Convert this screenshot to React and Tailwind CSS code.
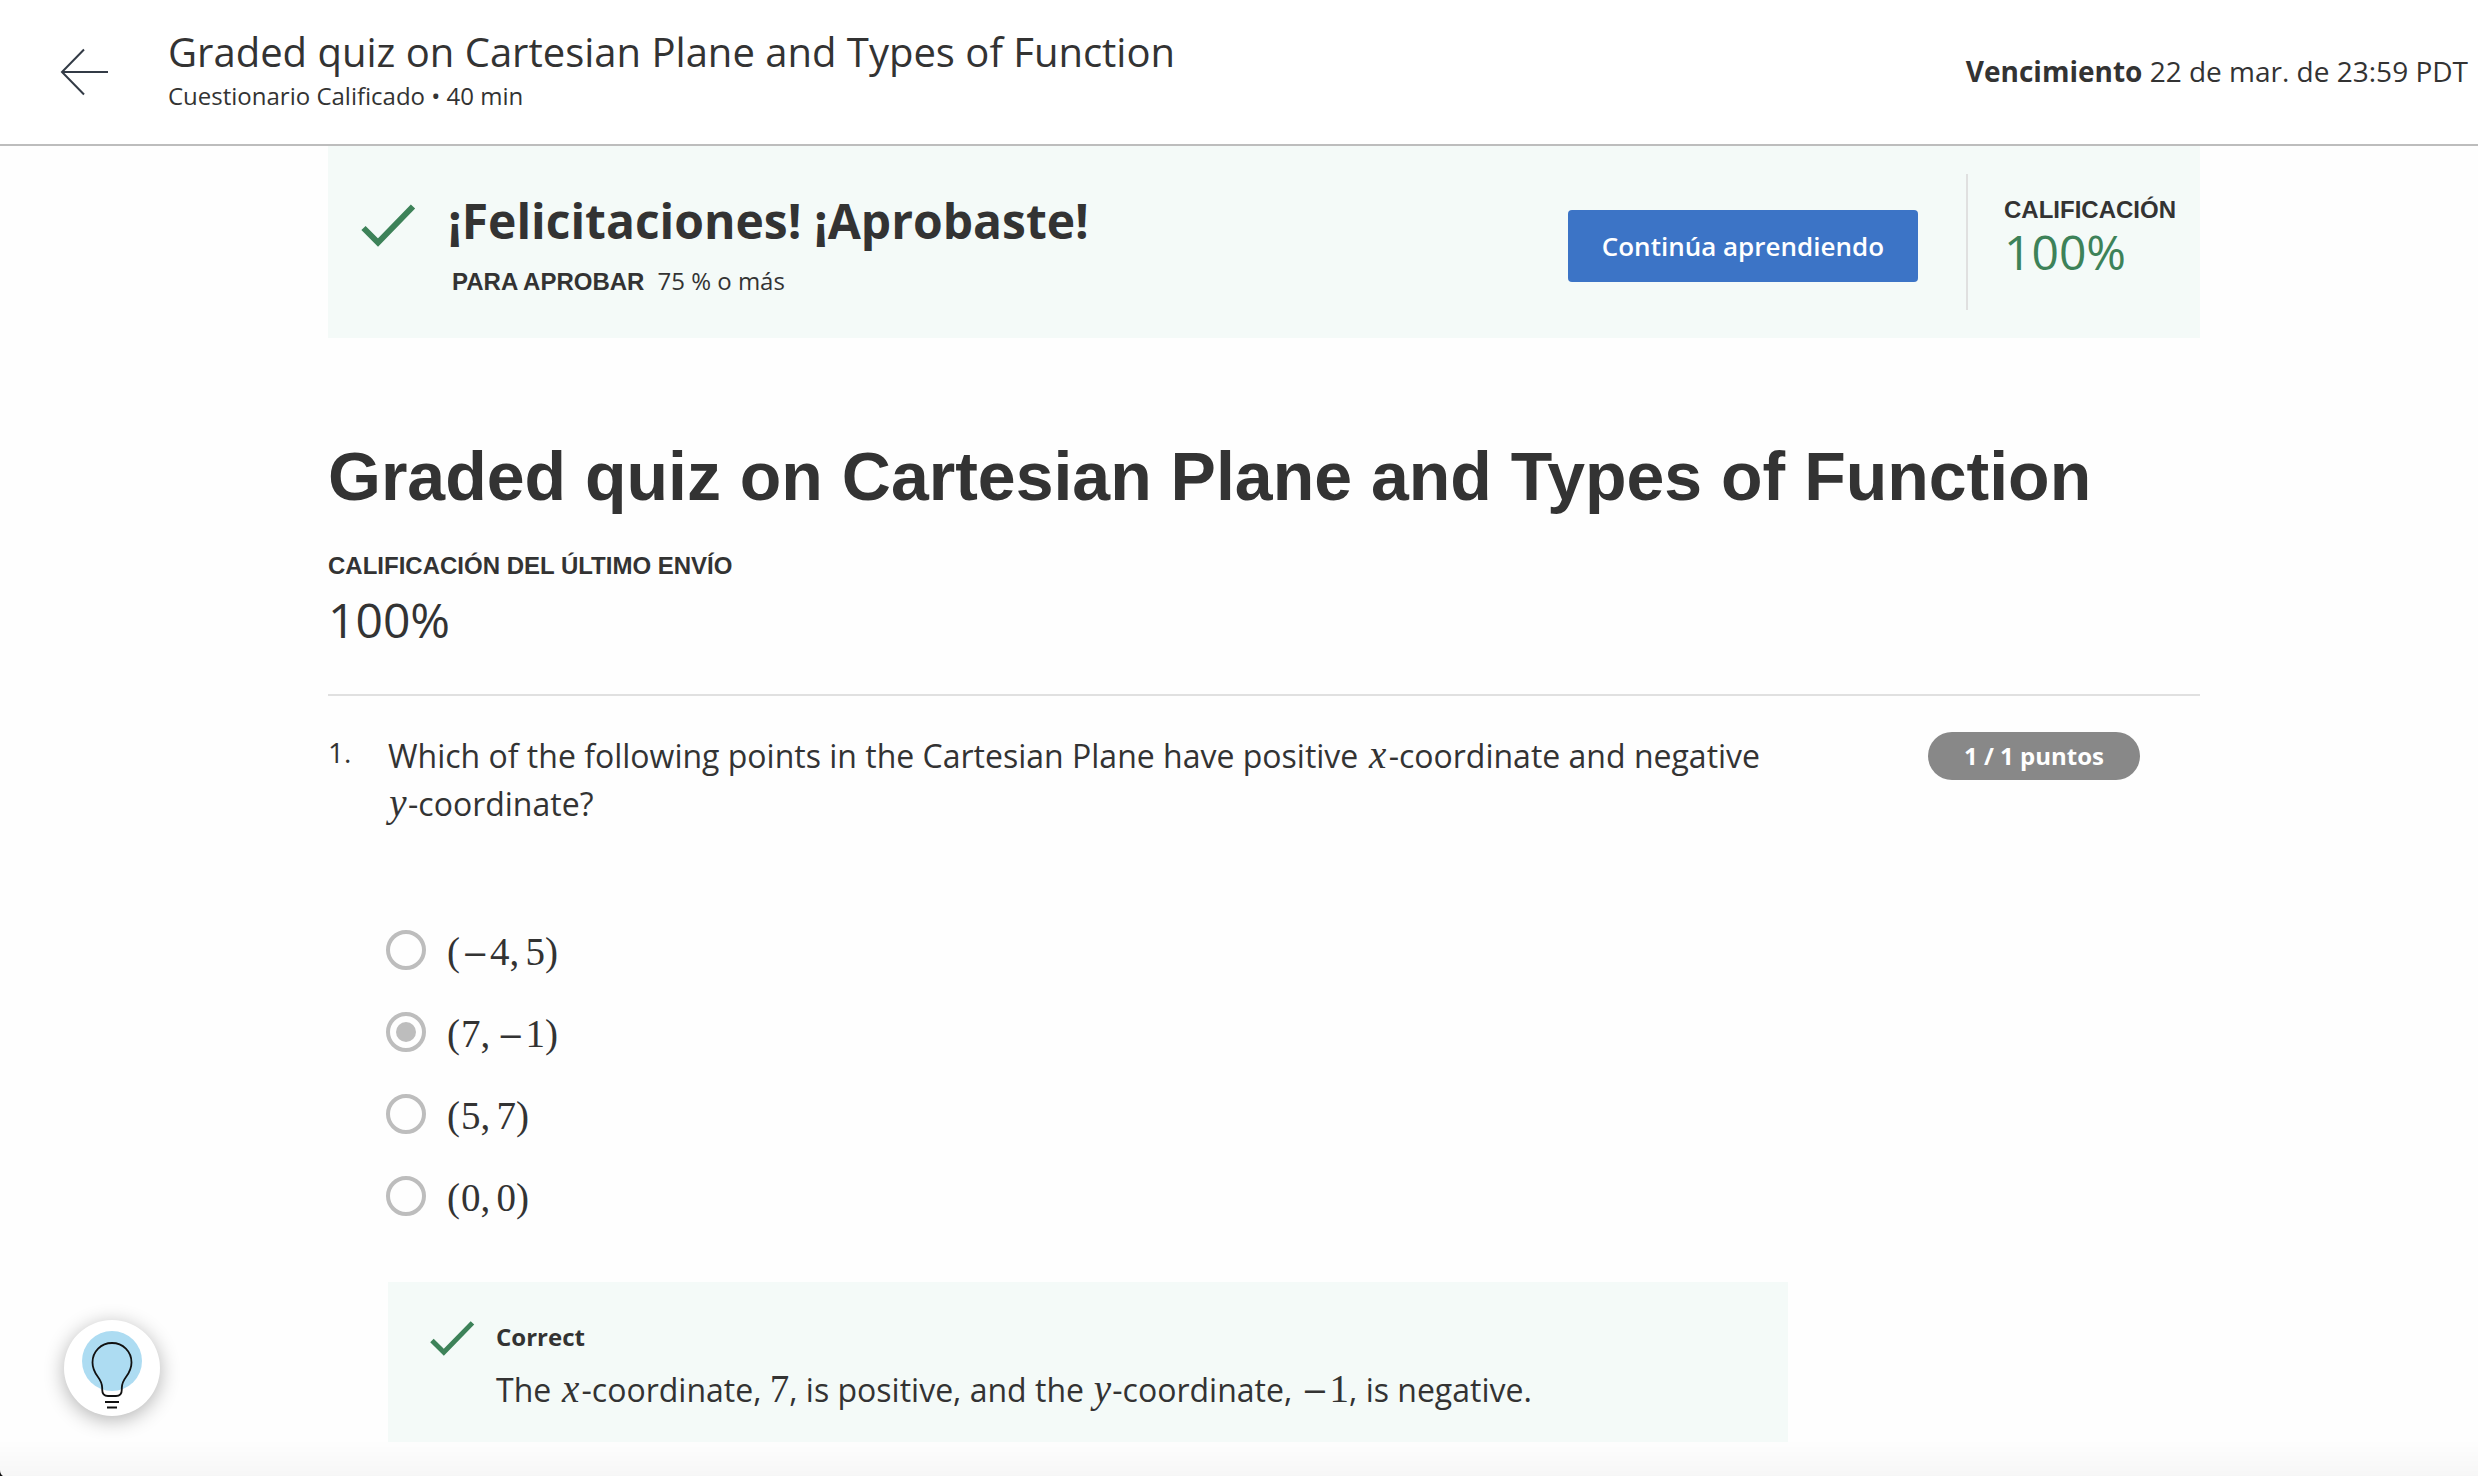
const OPTIONS = [
  { id: "a", first: "−4", second: "5", checked: false },
  { id: "b", first: "7", second: "−1", checked: true },
  { id: "c", first: "5", second: "7", checked: false },
  { id: "d", first: "0", second: "0", checked: false },
];

function BackArrow() {
  return (
    <svg width="48" height="48" viewBox="0 0 48 48" fill="none" stroke="#333b46" strokeWidth="2" aria-hidden="true">
      <path d="M24 1.5 2 24l22 22.5M2 24h46" />
    </svg>
  );
}

function Check({ className }) {
  return (
    <svg viewBox="0 0 56 44" fill="none" stroke="#3d8259" strokeWidth="6" className={className} aria-hidden="true">
      <path d="M3.500 25 18 39.500 53 3.500" />
    </svg>
  );
}

function Bulb() {
  return (
    <svg width="96" height="96" viewBox="0 0 96 96" fill="none" aria-hidden="true">
      <circle cx="48" cy="41" r="30" fill="#addcf2" />
      <path
        d="M48 23c-11 0-19.500 8.700-19.500 19.500 0 6 2.500 10.500 5.500 14.500 3 4 4.200 7 4.200 11v1.500c0 4 2 6.500 5.800 6.500h8c3.800 0 5.800-2.500 5.800-6.500V68c0-4 1.200-7 4.200-11 3-4 5.500-8.500 5.500-14.500C67.500 31.700 59 23 48 23Z"
        stroke="#111"
        strokeWidth="1.800"
      />
      <path d="M41 82h14M43 87.500h10" stroke="#111" strokeWidth="1.800" />
    </svg>
  );
}

function Variable({ children, className }) {
  return (
    <i className={`inline-block text-center font-['Liberation_Serif',serif] text-[39px] leading-none ${className}`}>
      {children}
    </i>
  );
}

function Num({ children }) {
  const negative = children.startsWith("−");
  return (
    <span className="font-['Liberation_Serif',serif] text-[39px] leading-none">
      {negative && (
        <span className="inline-block w-[29px] text-center font-['DejaVu_Serif',serif] text-[32px] leading-none">−</span>
      )}
      {negative ? children.slice(1) : children}
    </span>
  );
}

function Option({ option }) {
  return (
    <label className="flex h-[82px] items-center gap-[21px]">
      <input
        type="radio"
        name="question-1"
        defaultChecked={option.checked}
        className="grid size-10 appearance-none place-content-center rounded-full border-4 border-[#bdbdbd] before:size-5 before:rounded-full checked:before:bg-[#bdbdbd]"
      />
      <span className="flex items-baseline pt-[3px] font-['Liberation_Serif',serif] text-[39px] leading-[48px]">
        <span className="w-[14px]">(</span>
        <Num>{option.first}</Num>
        <span className="w-4">,</span>
        <Num>{option.second}</Num>
        <span>)</span>
      </span>
    </label>
  );
}

export default function App() {
  return (
    <div className="min-h-screen bg-[#fefefe] font-['Open_Sans',sans-serif] text-[#333]">
      <header className="flex items-center border-b-2 border-[#bdbdbd] bg-white py-[26px] pr-[10px] pl-[60px]">
        <button type="button" aria-label="Volver" className="mr-[60px]">
          <BackArrow />
        </button>
        <div className="flex-1 pb-1">
          <p className="text-[40px] leading-[52px]">Graded quiz on Cartesian Plane and Types of Function</p>
          <p className="text-2xl leading-9">Cuestionario Calificado • 40 min</p>
        </div>
        <p className="pb-0.5 text-[28px] leading-10">
          <b>Vencimiento</b> 22 de mar. de 23:59 PDT
        </p>
      </header>

      <main className="mr-[278px] ml-[328px]">
        <section className="flex items-center bg-[#f4faf8] py-7 pr-6 pl-8">
          <div className="flex flex-1 items-start gap-8">
            <Check className="mt-4 h-11 w-14" />
            <div>
              <h2 className="pt-0.5 text-5xl leading-[64px] font-bold">¡Felicitaciones! ¡Aprobaste!</h2>
              <p className="mt-3 flex items-baseline gap-[13px] pl-1 text-2xl leading-8">
                <b className="font-['Liberation_Sans',sans-serif]">PARA APROBAR</b>
                <span>75 % o más</span>
              </p>
            </div>
          </div>
          <button
            type="button"
            className="mt-2 mr-12 h-[72px] rounded bg-[#3c74c6] px-[34px] text-[26px] font-semibold text-white"
          >
            Continúa aprendiendo
          </button>
          <div className="h-[136px] border-l-2 border-[#e0e0e0] pt-5 pl-9">
            <p className="font-['Liberation_Sans',sans-serif] text-2xl leading-8 font-bold">CALIFICACIÓN</p>
            <p className="text-5xl leading-[52px] text-[#3d8259]">100%</p>
          </div>
        </section>

        <h1 className="mt-24 font-['Liberation_Sans',sans-serif] text-[68px] leading-[84px] font-bold">
          Graded quiz on Cartesian Plane and Types of Function
        </h1>
        <p className="mt-8 font-['Liberation_Sans',sans-serif] text-2xl leading-8 font-bold">
          CALIFICACIÓN DEL ÚLTIMO ENVÍO
        </p>
        <p className="mt-0.5 text-5xl leading-[72px]">100%</p>
        <hr className="mt-[38px] border-t-2 border-[#e0e0e0]" />

        <section className="flex items-start pt-9">
          <span className="w-[60px] shrink-0 text-[28px] leading-10">1.</span>
          <div className="max-w-[1400px] flex-1">
            <p className="text-[32px] leading-[48px]">
              Which of the following points in the Cartesian Plane have positive{" "}
              <span className="whitespace-nowrap">
                <Variable className="w-[22px]">x</Variable>-coordinate
              </span>{" "}
              and negative{" "}
              <span className="whitespace-nowrap">
                <Variable className="w-5">y</Variable>-coordinate?
              </span>
            </p>
            <fieldset className="mt-[81px] -ml-0.5">
              {OPTIONS.map((option) => (
                <Option key={option.id} option={option} />
              ))}
            </fieldset>
            <div className="mt-[45px] flex items-start gap-5 bg-[#f4faf8] pt-[38px] pb-7 pl-10">
              <Check className="h-9 w-12" />
              <div>
                <p className="pt-px text-2xl leading-8 font-bold">Correct</p>
                <p className="mt-[13px] text-[32px] leading-[48px]">
                  The <Variable className="w-[22px]">x</Variable>-coordinate, <Num>7</Num>, is positive, and the{" "}
                  <Variable className="w-5">y</Variable>
                  -coordinate, <Num>−1</Num>, is negative.
                </p>
              </div>
            </div>
          </div>
          <span className="mr-[60px] ml-auto rounded-full bg-[#888] px-9 text-2xl leading-[48px] font-bold whitespace-nowrap text-white">
            1 / 1 puntos
          </span>
        </section>
      </main>

      <div className="pointer-events-none fixed inset-x-0 bottom-0 h-9 bg-linear-to-b from-transparent to-black/3" />
      <button
        type="button"
        aria-label="Ayuda"
        className="fixed bottom-[60px] left-16 size-24 rounded-full bg-white shadow-[0_4px_20px_rgba(0,0,0,0.3)]"
      >
        <Bulb />
      </button>
      <svg className="fixed bottom-0 left-0" width="3" height="6" viewBox="0 0 3 6" aria-hidden="true">
        <path d="M0 0Q0 4 3 6H0Z" fill="#111" />
      </svg>
    </div>
  );
}
